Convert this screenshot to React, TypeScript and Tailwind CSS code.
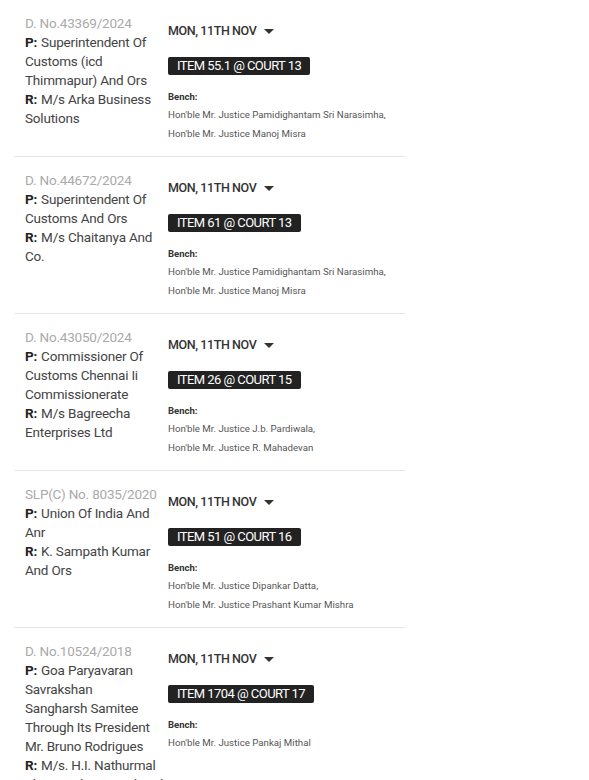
type Hearing = {
  caseNo: string;
  petitioner: string[];
  respondent: string[];
  item: string;
  court: string;
  judges: string[];
};

// line breaks kept as in the listing
const hearings: Hearing[] = [
  {
    caseNo: 'D. No.43369/2024',
    petitioner: ['Superintendent Of', 'Customs (icd', 'Thimmapur) And Ors'],
    respondent: ['M/s Arka Business', 'Solutions'],
    item: '55.1',
    court: '13',
    judges: ['Pamidighantam Sri Narasimha', 'Manoj Misra'],
  },
  {
    caseNo: 'D. No.44672/2024',
    petitioner: ['Superintendent Of', 'Customs And Ors'],
    respondent: ['M/s Chaitanya And', 'Co.'],
    item: '61',
    court: '13',
    judges: ['Pamidighantam Sri Narasimha', 'Manoj Misra'],
  },
  {
    caseNo: 'D. No.43050/2024',
    petitioner: ['Commissioner Of', 'Customs Chennai Ii', 'Commissionerate'],
    respondent: ['M/s Bagreecha', 'Enterprises Ltd'],
    item: '26',
    court: '15',
    judges: ['J.b. Pardiwala', 'R. Mahadevan'],
  },
  {
    caseNo: 'SLP(C) No. 8035/2020',
    petitioner: ['Union Of India And', 'Anr'],
    respondent: ['K. Sampath Kumar', 'And Ors'],
    item: '51',
    court: '16',
    judges: ['Dipankar Datta', 'Prashant Kumar Mishra'],
  },
  {
    caseNo: 'D. No.10524/2018',
    petitioner: [
      'Goa Paryavaran',
      'Savrakshan',
      'Sangharsh Samitee',
      'Through Its President',
      'Mr. Bruno Rodrigues',
    ],
    respondent: ['M/s. H.I. Nathurmal', 'Thanwardas Ramchand'],
    item: '1704',
    court: '17',
    judges: ['Pankaj Mithal'],
  },
];

function CaretDown() {
  return (
    <svg width="10" height="5" viewBox="0 0 10 5" className="fill-[#333]">
      <path d="M0 0h10L5 5z" />
    </svg>
  );
}

function Party({ label, lines }: { label: string; lines: string[] }) {
  return (
    <>
      {lines.map((l, i) => (
        <div key={i}>
          {i === 0 && <span className="font-bold text-[#222] mr-[4px]">{label}</span>}
          {l}
        </div>
      ))}
    </>
  );
}

export default function App() {
  return (
    <div
      className="w-[589px] h-[780px] overflow-hidden bg-white"
      style={{ fontFamily: 'Roboto, "Liberation Sans", sans-serif' }}
    >
      <div className="w-[391px] ml-[14px]">
        {hearings.map((h, i) => (
          <div
            key={i}
            className="flex pl-[11px] pt-[14px] border-b border-[#e6e6e6] h-[157px]"
          >
            <div className="w-[143px] shrink-0 text-[13.5px] leading-[19px] text-[#444] tracking-[-0.2px] whitespace-nowrap">
              <div className="text-[#aaa]">{h.caseNo}</div>
              <Party label="P:" lines={h.petitioner} />
              <Party label="R:" lines={h.respondent} />
            </div>
            <div className="flex flex-col">
              <div className="flex items-center gap-[8px] mt-[10px] h-[14px]">
                <span className="text-[12.5px] font-medium text-[#333] tracking-[-0.4px]">MON, 11TH NOV</span>
                <CaretDown />
              </div>
              <div className="mt-[15px]">
                <span className="inline-block bg-[#222] text-white rounded-[2px] px-[9px] h-[18px] leading-[18px] text-[13px] tracking-[-0.55px]">
                  ITEM {h.item} @ COURT {h.court}
                </span>
              </div>
              <div className="mt-[14px] text-[9.5px] font-bold text-[#333] leading-[12px]">Bench:</div>
              <div className="text-[9.7px] text-[#555] leading-[19px] mt-[2px]">
                {h.judges.map((j, k) => (
                  <div key={k}>
                    Hon'ble Mr. Justice {j}
                    {k < h.judges.length - 1 ? ',' : ''}
                  </div>
                ))}
              </div>
            </div>
          </div>
        ))}
      </div>
    </div>
  );
}
